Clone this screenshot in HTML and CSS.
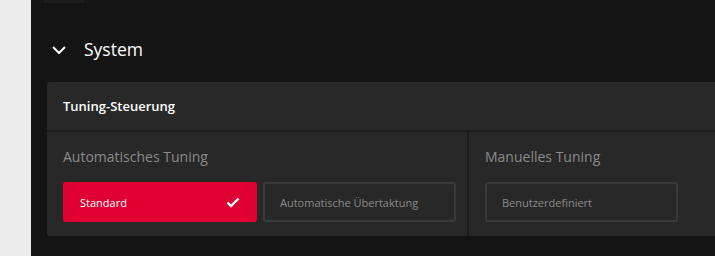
FILE: index.html
```html
<!DOCTYPE html>
<html lang="de">
<head>
    <meta charset="UTF-8">
    <meta name="viewport" content="width=device-width, initial-scale=1.0">
    <title>Tuning-Steuerung</title>
    <link rel="stylesheet" href="styles.css">
</head>
<body>
    <div class="sidebar"></div>

    <div class="main">
        <div class="top-tab"></div>

        <div class="section-title">
            <svg class="chevron" width="14" height="8" viewBox="0 0 14 8">
                <polyline points="1,1 7,7 13,1" fill="none" stroke="#fff" stroke-width="2"/>
            </svg>
            <span>System</span>
        </div>

        <div class="card">
            <div class="card-header">Tuning-Steuerung</div>
            <div class="card-body">
                <div class="group group-auto">
                    <div class="group-label">Automatisches Tuning</div>
                    <div class="options">
                        <button class="option selected">
                            <span>Standard</span>
                            <svg width="14" height="11" viewBox="0 0 14 11">
                                <polyline points="1.5,5.5 5,9 12.5,1.5" fill="none" stroke="#fff" stroke-width="2.4"/>
                            </svg>
                        </button>
                        <button class="option">Automatische Übertaktung</button>
                    </div>
                </div>
                <div class="group group-manual">
                    <div class="group-label">Manuelles Tuning</div>
                    <div class="options">
                        <button class="option">Benutzerdefiniert</button>
                    </div>
                </div>
            </div>
        </div>
    </div>
</body>
</html>
```

FILE: styles.css
```css
* {
    margin: 0;
    padding: 0;
    box-sizing: border-box;
}

body {
    display: flex;
    width: 715px;
    height: 256px;
    overflow: hidden;
    font-family: "Open Sans", "Noto Sans", sans-serif;
    background: #141414;
    color: white;
}

.sidebar {
    width: 31px;
    background: #ececec;
    flex-shrink: 0;
}

.main {
    flex: 1;
    padding-left: 16px;
}

.top-tab {
    width: 40px;
    height: 3px;
    margin-left: -3px;
    background: #1d1d1d;
}

.section-title {
    display: flex;
    align-items: center;
    height: 42px;
    margin-top: 25px;
    margin-bottom: 12px;
    padding-left: 5px;
    font-size: 17.5px;
}

.chevron {
    margin-right: 18px;
    margin-top: 1px;
}

.card {
    background: #282828;
    border-radius: 3px 0 0 3px;
}

.card-header {
    height: 50px;
    padding: 0 16px;
    display: flex;
    align-items: center;
    font-size: 13px;
    font-weight: 600;
    border-bottom: 2px solid #1b1b1b;
}

.card-body {
    display: flex;
    height: 104px;
}

.group {
    padding: 15px 0 0 16px;
}

.group-auto {
    width: 422px;
    border-right: 2px solid #1b1b1b;
}

.group-manual {
    padding-left: 16px;
}

.group-label {
    font-size: 14px;
    color: #8a8a8a;
    height: 20px;
    line-height: 20px;
    margin-bottom: 15px;
}

.options {
    display: flex;
    gap: 6px;
}

.option {
    width: 193px;
    height: 40px;
    padding: 0 15px;
    display: flex;
    align-items: center;
    justify-content: space-between;
    font-family: inherit;
    font-size: 11px;
    color: #8a8a8a;
    background: #282828;
    border: 2px solid #3a3a3a;
    border-radius: 3px;
    text-align: left;
}

.option.selected {
    width: 194px;
    background: #e00032;
    border-color: #e00032;
    color: #fff;
}
```
